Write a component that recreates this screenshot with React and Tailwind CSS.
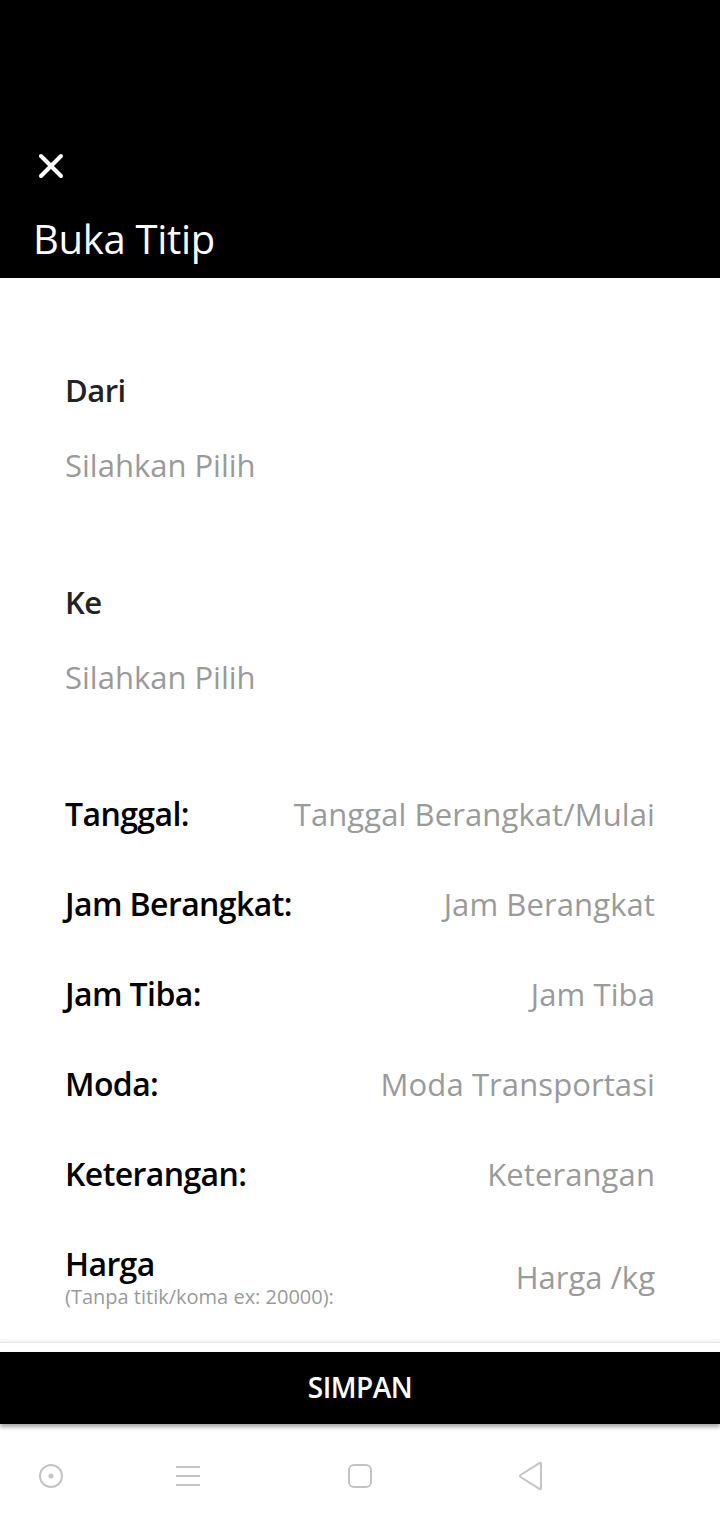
import { X } from "lucide-react";

const ROWS = [
  { label: "Tanggal:", placeholder: "Tanggal Berangkat/Mulai" },
  { label: "Jam Berangkat:", placeholder: "Jam Berangkat" },
  { label: "Jam Tiba:", placeholder: "Jam Tiba" },
  { label: "Moda:", placeholder: "Moda Transportasi" },
  { label: "Keterangan:", placeholder: "Keterangan" },
];

const font = { fontFamily: '"Open Sans", "Noto Sans", sans-serif' };

function PickField({ label }) {
  return (
    <div className="flex flex-col">
      <span className="text-[31px] font-semibold text-[#222] leading-[40px] tracking-[-0.5px]">{label}</span>
      <span className="mt-[35px] text-[31px] text-[#9a9a9a] leading-[40px]">Silahkan Pilih</span>
    </div>
  );
}

export default function App() {
  return (
    <div className="w-[720px] h-[1520px] flex flex-col bg-white" style={font}>
      {/* header */}
      <div className="h-[278px] bg-black flex flex-col justify-end px-[33px] pb-[14px] shrink-0">
        <X size={40} strokeWidth={2.4} className="text-white -ml-[2px] mb-[28px]" />
        <h1 className="text-[40px] text-white leading-[50px] tracking-[-0.3px]">Buka Titip</h1>
      </div>

      {/* form */}
      <div className="flex-1 flex flex-col px-[65px] pt-[92px]">
        <PickField label="Dari" />
        <div className="h-[97px]" />
        <PickField label="Ke" />

        <div className="mt-[97px] flex flex-col gap-[50px]">
          {ROWS.map((r) => (
            <div key={r.label} className="flex items-center justify-between h-[40px]">
              <span className="text-[32px] font-semibold text-black tracking-[-0.6px]">{r.label}</span>
              <span className="text-[31px] text-[#9a9a9a] tracking-[0.1px]">{r.placeholder}</span>
            </div>
          ))}
          <div className="flex items-start justify-between">
            <div className="flex flex-col">
              <span className="text-[32px] font-semibold text-black leading-[40px] tracking-[-0.6px]">Harga</span>
              <span className="text-[20px] text-[#9a9a9a] leading-[24px] mt-[1px]">(Tanpa titik/koma ex: 20000):</span>
            </div>
            <span className="text-[31px] text-[#9a9a9a] leading-[40px] mt-[13px]">Harga /kg</span>
          </div>
        </div>
      </div>

      {/* button */}
      <div className="shrink-0 border-t border-[#e6e6e6] shadow-[0_-2px_3px_rgba(0,0,0,0.06)] pt-[9px]">
        <button className="w-full h-[72px] bg-black text-white text-[28px] font-semibold tracking-[-0.5px] leading-none pb-[2px] shadow-[0_3px_4px_rgba(0,0,0,0.35)]">
          SIMPAN
        </button>
      </div>

      {/* nav bar */}
      <div className="h-[96px] shrink-0 flex items-center pt-[8px]">
        <div className="w-[102px] flex justify-center">
          <svg width="26" height="26" viewBox="0 0 26 26" fill="none" stroke="#c4c4c4" strokeWidth="2">
            <circle cx="13" cy="13" r="11" />
            <circle cx="13" cy="13" r="2.5" fill="#c4c4c4" stroke="none" />
          </svg>
        </div>
        <div className="w-[172px] flex justify-center">
          <svg width="26" height="22" viewBox="0 0 26 22" fill="none" stroke="#c4c4c4" strokeWidth="2">
            <path d="M1 2h24M1 11h24M1 20h24" />
          </svg>
        </div>
        <div className="w-[172px] flex justify-center">
          <svg width="26" height="26" viewBox="0 0 26 26" fill="none" stroke="#c4c4c4" strokeWidth="2">
            <rect x="2" y="2" width="22" height="22" rx="5" />
          </svg>
        </div>
        <div className="w-[170px] flex justify-center">
          <svg width="28" height="30" viewBox="0 0 28 30" fill="none" stroke="#c4c4c4" strokeWidth="2" strokeLinejoin="round">
            <path d="M24 2.5v25c0 .8-.6 1-1.2.6L3.5 16c-.7-.5-.7-1.5 0-2L22.8 1.9c.6-.4 1.2-.2 1.2.6z" />
          </svg>
        </div>
      </div>
    </div>
  );
}
